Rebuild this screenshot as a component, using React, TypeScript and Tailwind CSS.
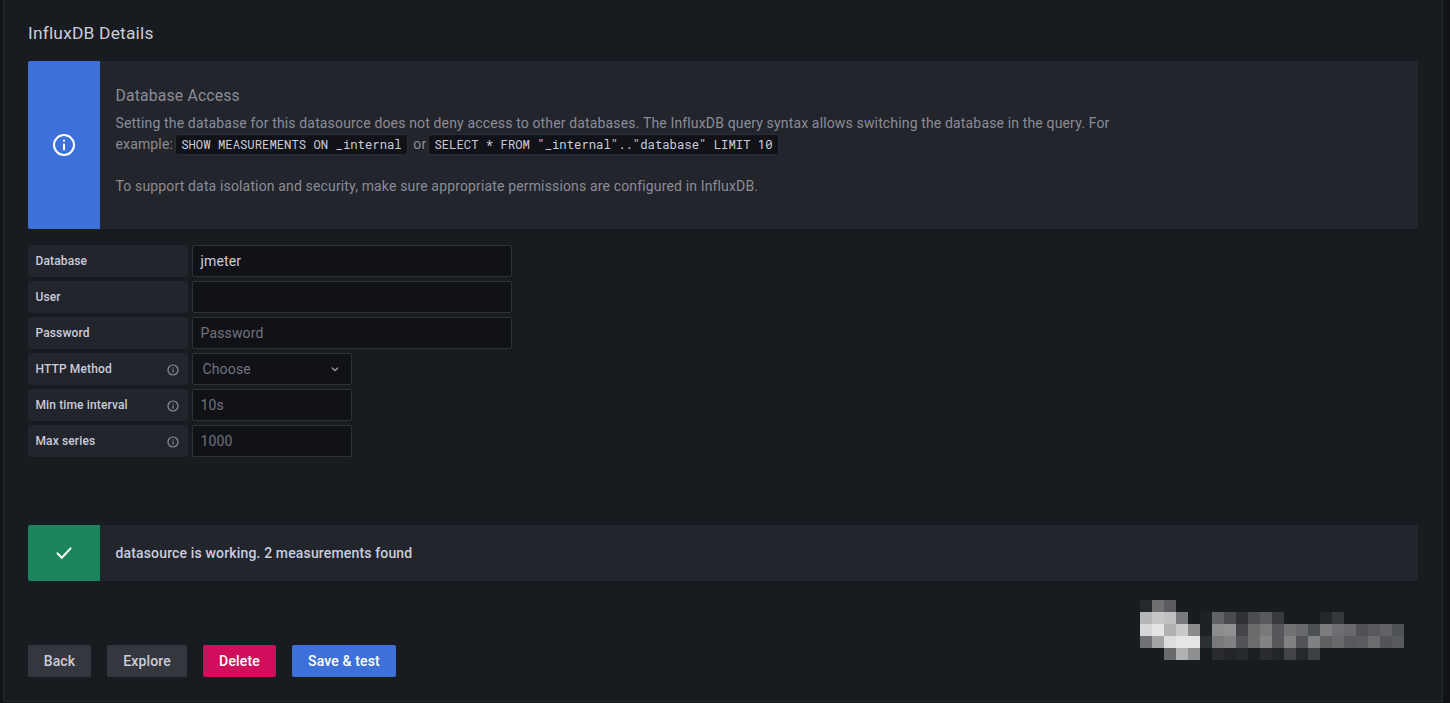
import React from "react";

const F = "font-['Roboto',sans-serif]";

const pixels: [number, string[]][] = [
  [0, ["#25282d", "#6f7072", "#5a5b5e"]],
  [1, ["#b5b6b8", "#c5c6c8", "#bfc0c2", "#78797c", "", "#1d2025", "#626366", "#4a4b4e", "#303236", "#4c4d50", "#58595c", "#38393c", "", "", "", "#24272b", "#36393c"]],
  [2, ["#d6d7d8", "#e2e3e3", "#b0b1b3", "#c8c9ca", "#8a8b8d", "#1d2025", "#8b8c8e", "#8f9092", "#434447", "#6a6b6d", "#78797b", "#555659", "#707173", "#68696c", "#4d5053", "#7b7c7e", "#6d6e71", "#68696c", "#505154", "#58595c", "#626366", "#4f5256"]],
  [3, ["#707174", "#a3a4a6", "#dcdddd", "#e4e5e6", "#e4e5e6", "#2b3034", "#79797c", "#808183", "#535457", "#6b6c6e", "#828385", "#565759", "#808183", "#535458", "#808183", "#5f6062", "#68696b", "#58595c", "#5a5b5e", "#6b6c6e", "#535457", "#58595c"]],
  [4, ["", "", "#68696b", "#b0b1b2", "#8e8f90", "", "#2b2c30", "#232428", "#25292c", "#1c1f23", "#2b2c30", "#222528", "#434447", "#25292c", "#3c4144"]],
];

function PixelLogo() {
  return (
    <svg width="264" height="60" viewBox="0 0 264 60" shapeRendering="crispEdges" className="block">
      {pixels.flatMap(([r, cols]) =>
        cols.map((c, i) => (c ? <rect key={`${r}-${i}`} x={i * 12} y={r * 12} width="12" height="12" fill={c} /> : null))
      )}
    </svg>
  );
}

function InfoIcon({ size, color, sw }: { size: number; color: string; sw: number }) {
  return (
    <svg width={size} height={size} viewBox="0 0 24 24" fill="none" stroke={color} strokeWidth={sw} strokeLinecap="round">
      <circle cx="12" cy="12" r="10" />
      <path d="M12 11.5v5" />
      <path d="M12 7.6v.2" />
    </svg>
  );
}

function Code({ children, first }: { children: React.ReactNode; first?: boolean }) {
  return (
    <code
      className={`-mt-[2px] mb-0 inline-block h-[21px] rounded-[3px] border border-[#2a2d33] bg-[#111217] px-[5px] align-middle font-['Roboto_Mono','DejaVu_Sans_Mono',monospace] text-[12.25px] leading-[19px] tracking-normal text-[#ccccdc] ${
        first ? "-ml-[1.5px]" : ""
      }`}
    >
      {children}
    </code>
  );
}

function Row({ label, info, children }: { label: string; info?: boolean; children: React.ReactNode }) {
  return (
    <div className="flex h-8 gap-1">
      <div className="flex w-40 items-center justify-between rounded-[3px] bg-[#22252b] pb-[1px] pl-[7.5px] pr-[9px] text-xs font-medium tracking-[0.01071em] text-[#ccccdc]">
        <span>{label}</span>
        {info && (
          <span className="pt-[3px]">
            <InfoIcon size={12} color="#8e8e99" sw={2.4} />
          </span>
        )}
      </div>
      {children}
    </div>
  );
}

function Field({ wide, value, placeholder }: { wide?: boolean; value?: string; placeholder?: string }) {
  return (
    <div
      className={`flex h-8 items-center rounded-[2px] border border-[#2e3136] bg-[#111217] pl-[7.5px] text-sm tracking-[0.01071em] ${wide ? "w-80" : "w-40"} ${
        value ? "text-[#ccccdc]" : "text-[#72727d]"
      }`}
    >
      {value ?? placeholder}
    </div>
  );
}

function Btn({ label, cls }: { label: string; cls: string }) {
  return (
    <button className={`flex h-8 items-center justify-center rounded-[2px] text-sm font-medium tracking-[0.01071em] ${cls}`}>{label}</button>
  );
}

export default function App() {
  return (
    <div className={`flex h-[703px] w-full overflow-hidden bg-[#111217] ${F}`}>
      <div className="ml-[3px] flex h-[702px] w-[1440px] flex-col border-x border-b border-[#25282d] bg-[#181b1f] pl-6 pr-6">
        <h3 className="mt-[22px] h-[39px] text-[17.4px] font-normal leading-[22px] tracking-[0.01071em] text-[#ccccdc]">InfluxDB Details</h3>

        <div className="flex h-[168px] w-[1390px] overflow-hidden rounded-[2px] bg-[#22252b]">
          <div className="flex w-[72px] shrink-0 items-center justify-center bg-[#3d71d9]">
            <InfoIcon size={24} color="#ffffff" sw={2} />
          </div>
          <div className="pl-[15.5px] pt-[24px] text-sm leading-[21px] tracking-[0.01071em] text-[#8c8c97]">
            <div className="mb-[7px] text-[15.75px] font-normal leading-[21px] tracking-[0.01071em] text-[#8c8c97]">Database Access</div>
            <div className="w-[1010px]">
              Setting the database for this datasource does not deny access to other databases. The InfluxDB query syntax
              allows switching the database in the query. For example: <Code first>SHOW MEASUREMENTS ON _internal</Code>{" "}
              <span className="mx-[2px]">or</span>
              <Code>SELECT * FROM "_internal".."database" LIMIT 10</Code>
            </div>
            <div className="mt-[21px]">
              To support data isolation and security, make sure appropriate permissions are configured in InfluxDB.
            </div>
          </div>
        </div>

        <div className="mt-4 flex flex-col gap-1">
          <Row label="Database"><Field wide value="jmeter" /></Row>
          <Row label="User"><Field wide placeholder="" /></Row>
          <Row label="Password"><Field wide placeholder="Password" /></Row>
          <Row label="HTTP Method" info>
            <div className="flex h-8 w-40 items-center justify-between rounded-[2px] border border-[#2e3136] bg-[#111217] pl-[9.5px] pr-[8px] text-sm tracking-[0.01071em] text-[#72727d]">
              <span>Choose</span>
              <svg width="16" height="16" viewBox="0 0 24 24" fill="none" stroke="#9a9aa5" strokeWidth="2" strokeLinecap="round" strokeLinejoin="round">
                <path d="M8 10.5l4 4 4-4" />
              </svg>
            </div>
          </Row>
          <Row label="Min time interval" info><Field placeholder="10s" /></Row>
          <Row label="Max series" info><Field placeholder="1000" /></Row>
        </div>

        <div className="mt-[68px] flex h-14 w-[1390px] overflow-hidden rounded-[2px] bg-[#22252b]">
          <div className="flex w-[72px] shrink-0 items-center justify-center bg-[#1b855e]">
            <svg width="24" height="24" viewBox="0 0 24 24" fill="none" stroke="#ffffff" strokeWidth="2" strokeLinecap="round" strokeLinejoin="round">
              <path d="M5.5 12.4l4.3 4.3L18.6 7.4" />
            </svg>
          </div>
          <div className="flex items-center pl-[15.5px] text-sm font-medium tracking-[0.01071em] text-[#ccccdc]">datasource is working. 2 measurements found</div>
        </div>

        <div className="mt-[19px] flex h-[77px] w-[1390px] justify-between">
          <div className="flex gap-4 self-end">
            <Btn label="Back" cls="w-[63px] bg-[#34373d] text-[#ccccdc]" />
            <Btn label="Explore" cls="w-20 bg-[#34373d] text-[#ccccdc]" />
            <Btn label="Delete" cls="w-[73px] bg-[#d10e5c] text-white" />
            <Btn label="Save & test" cls="w-[104px] bg-[#3d71d9] text-white" />
          </div>
          <div className="mr-[14px] self-start">
            <PixelLogo />
          </div>
        </div>
      </div>
    </div>
  );
}
